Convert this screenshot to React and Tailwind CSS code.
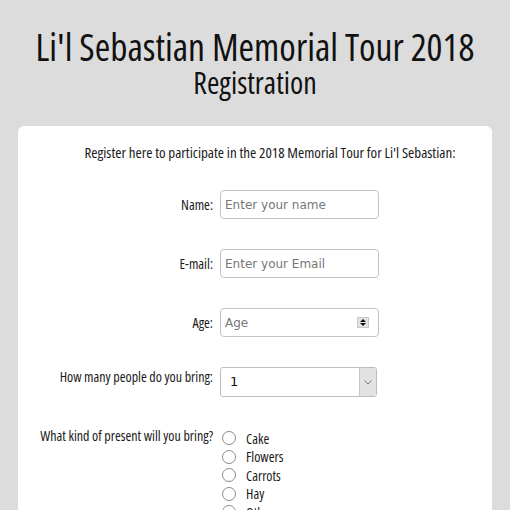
import React from "react";

function Label({ children }) {
  return (
    <div className="w-[195px] shrink-0 text-right text-[14px] leading-[18px] text-[#1a1a1a]">
      {children}
    </div>
  );
}

function TextField({ placeholder }) {
  return (
    <input
      type="text"
      placeholder={placeholder}
      className="w-[159px] h-[29px] rounded-[4px] border border-[#c4c4c4] bg-white px-[4px] text-[12px] text-[#333] placeholder-[#777] [font-family:'DejaVu_Sans',sans-serif] [font-stretch:normal] focus:outline-none"
    />
  );
}

export default function App() {
  const presents = ["Cake", "Flowers", "Carrots", "Hay", "Other"];

  return (
    <div className="min-h-[510px] w-[510px] overflow-hidden bg-[#dcdcdc] [font-family:'Open_Sans',sans-serif] [font-stretch:condensed]">
      <header className="pt-[27px] text-center text-[#111]">
        <h1 className="text-[37.5px] leading-[40px]">Li'l Sebastian Memorial Tour 2018</h1>
        <h2 className="text-[30px] leading-[32px]">Registration</h2>
      </header>

      <main className="mx-[18px] mt-[27px] rounded-[6px] bg-white pb-6">
        <p className="pl-[30px] pt-[17px] text-center text-[15px] leading-[18px] text-[#1a1a1a]">
          Register here to participate in the 2018 Memorial Tour for Li'l Sebastian:
        </p>

        <div className="mt-[29px] flex flex-col gap-[30px]">
          <div className="flex items-center gap-[7px]">
            <Label>Name:</Label>
            <TextField placeholder="Enter your name" />
          </div>

          <div className="flex items-center gap-[7px]">
            <Label>E-mail:</Label>
            <TextField placeholder="Enter your Email" />
          </div>

          <div className="flex items-center gap-[7px]">
            <Label>Age:</Label>
            <div className="relative">
              <TextField placeholder="Age" />
              <span className="absolute right-[10px] top-[9px] flex h-[11px] w-[12px] flex-col items-center justify-center gap-[1px] border border-[#c8c8c8] bg-[#e4e4e4]">
                <svg width="6" height="3" viewBox="0 0 6 3"><path d="M0 3L3 0L6 3Z" fill="#111" /></svg>
                <svg width="6" height="3" viewBox="0 0 6 3"><path d="M0 0L3 3L6 0Z" fill="#111" /></svg>
              </span>
            </div>
          </div>

          <div className="flex items-start gap-[7px]">
            <div className="pt-[1px]">
              <Label>How many people do you bring:</Label>
            </div>
            <div className="flex h-[30px] w-[157px] items-stretch rounded-[3px] border border-[#bdbdbd] bg-white">
              <span className="flex flex-1 items-center pl-[9px] text-[13px] text-[#111] [font-family:'DejaVu_Sans',sans-serif] [font-stretch:normal]">
                1
              </span>
              <span className="flex w-[17px] items-center justify-center border-l border-[#c8c8c8] bg-[#e2e2e2]">
                <svg width="8" height="5" viewBox="0 0 8 5"><path d="M0.5 0.5L4 4L7.5 0.5" fill="none" stroke="#777" strokeWidth="1" /></svg>
              </span>
            </div>
          </div>

          <div className="flex items-start gap-[7px]">
            <Label>What kind of present will you bring?</Label>
            <div className="flex flex-col gap-[4px] pt-[4px]">
              {presents.map((p) => (
                <label key={p} className="flex h-[14.5px] items-center gap-[10px] text-[14px] text-[#1a1a1a]">
                  <span className="ml-[2px] h-[14px] w-[14px] rounded-full border border-[#8a8a8a] bg-white" />
                  {p}
                </label>
              ))}
            </div>
          </div>
        </div>
      </main>
    </div>
  );
}
